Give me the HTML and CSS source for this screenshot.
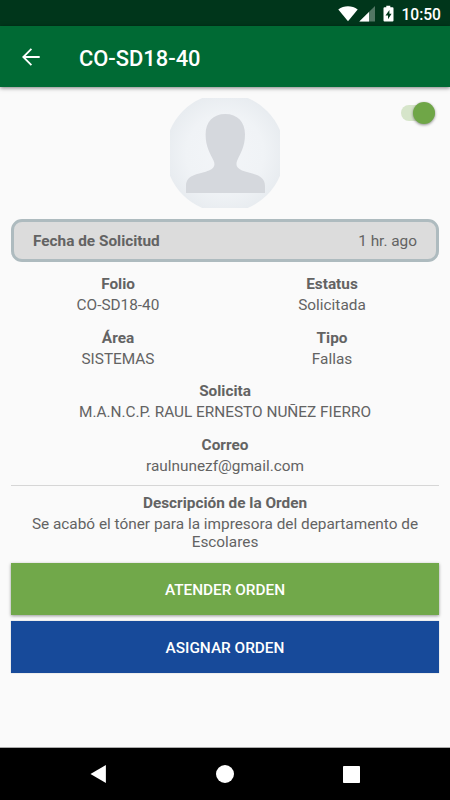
FILE: index.html
```html
<!DOCTYPE html>
<html lang="es">
<head>
<meta charset="utf-8">
<title>CO-SD18-40</title>
<link rel="stylesheet" href="styles.css">
</head>
<body>
<div class="screen">
  <div class="status">
    <svg class="status-icons" width="56" height="20" viewBox="0 0 56 20">
      <path fill="#fff" d="M0.3 4.4C5.8.1 14 .1 19.700 4.400L10 16.300Z"/>
      <path fill="#fff" fill-opacity=".32" d="M37 1V16.600H21.300Z"/>
      <path fill="#fff" d="M31 7V16.600H21.300Z"/>
      <path fill="#fff" fill-rule="evenodd" d="M48.300 0.800h4V2.300h2.200a1 1 0 0 1 1 1V15.600a1 1 0 0 1-1 1h-8a1 1 0 0 1-1-1V3.300a1 1 0 0 1 1-1h1.800ZM51.400 5L47.500 10.500H50V14.300L53.600 8.800H51.400Z"/>
    </svg>
    <span class="clock">10:50</span>
  </div>
  <header class="appbar">
    <svg class="back" width="18" height="18" viewBox="0 0 18 18" fill="none" stroke="#fff" stroke-width="1.800"><path d="M17.700 9H1.500M9.400 .9L1.300 9l8.100 8.100"/></svg>
    <h1 class="title">CO-SD18-40</h1>
  </header>
  <main class="content">
    <div class="profile">
      <svg class="avatar" width="110" height="110" viewBox="0 0 110 110">
        <defs>
          <radialGradient id="disc"><stop offset="0" stop-color="#f3f5f8"/><stop offset=".65" stop-color="#f0f3f6"/><stop offset="1" stop-color="#e8ecf0"/></radialGradient>
        </defs>
        <circle cx="55" cy="55" r="59.500" fill="url(#disc)"/>
        <path fill="#d5d8dd" d="M55.300 16C67.500 16 75 24 75 36.500C75 49 70 56 67.200 62.500C65.500 67 66.500 70 72 72.500C80 76 95 75.500 95 88V95H16V88C16 75.500 31 76 39 72.500C44.500 70 45.500 67 43.500 62.500C40.500 56 35.600 49 35.600 36.500C35.600 24 43 16 55.300 16Z"/>
      </svg>
      <div class="switch"><span class="thumb"></span></div>
    </div>
    <div class="date"><b>Fecha de Solicitud</b><span>1 hr. ago</span></div>
    <div class="fields">
      <div class="field"><b>Folio</b><span>CO-SD18-40</span></div>
      <div class="field"><b>Estatus</b><span>Solicitada</span></div>
      <div class="field"><b>Área</b><span>SISTEMAS</span></div>
      <div class="field"><b>Tipo</b><span>Fallas</span></div>
      <div class="field wide"><b>Solicita</b><span>M.A.N.C.P. RAUL ERNESTO NUÑEZ FIERRO</span></div>
      <div class="field wide"><b>Correo</b><span>raulnunezf@gmail.com</span></div>
    </div>
    <div class="field description"><b>Descripción de la Orden</b><span>Se acabó el tóner para la impresora del departamento de Escolares</span></div>
    <button class="btn attend">ATENDER ORDEN</button>
    <button class="btn assign">ASIGNAR ORDEN</button>
  </main>
  <nav class="nav">
    <svg width="18" height="20" viewBox="0 0 18 20"><path fill="#fff" d="M15.900 1V19L0.500 10Z"/></svg>
    <svg width="18" height="18" viewBox="0 0 18 18"><circle cx="9" cy="9" r="9" fill="#fff"/></svg>
    <svg width="18" height="17" viewBox="0 0 18 17"><rect x="1" width="17" height="17" rx=".8" fill="#fff"/></svg>
  </nav>
</div>
</body>
</html>
```

FILE: styles.css
```css
* { box-sizing: border-box; }
body { margin: 0; background: #fafafa; font-family: Roboto, sans-serif; font-size: 15.36px; line-height: 18px; color: #636363; }
.screen { width: 450px; height: 800px; display: flex; flex-direction: column; overflow: hidden; }
.status { height: 26px; flex: none; background: #00361b; display: flex; justify-content: flex-end; align-items: center; padding-right: 9px; color: #fff; }
.status-icons { margin: 4px 7px 0 0; }
.clock { font-size: 15.6px; font-weight: 500; padding-top: 3px; }
.appbar { height: 61px; flex: none; background: #006a34; display: flex; align-items: center; padding: 0 22px; box-shadow: 0 1px 4px rgba(0,0,0,.5); }
.back { flex: none; }
.title { margin: 4px 0 0 39px; font-size: 21.9px; line-height: 26px; font-weight: 500; color: #fff; }
.content { flex: 1; padding: 11px 11px 0; display: flex; flex-direction: column; }
.profile { height: 110px; display: grid; grid-template-columns: 1fr 110px 1fr; }
.avatar { grid-column: 2; }
.switch { width: 34px; height: 16px; margin: 7px 4px 0 0; justify-self: end; border-radius: 8px; background: #d6e5ca; display: flex; justify-content: flex-end; align-items: center; }
.thumb { width: 22px; height: 22px; flex: none; border-radius: 50%; background: #6fa647; box-shadow: 0 1px 3px rgba(0,0,0,.45); }
.date { height: 43px; margin-top: 11px; border: 3px solid #aebbbf; border-radius: 11px; background: #dcdcdc; padding: 1px 19px 0; display: flex; justify-content: space-between; align-items: center; }
.fields { display: grid; grid-template-columns: 1fr 1fr; row-gap: 14.4px; padding: 13.4px 0 10.4px; }
.field { display: flex; flex-direction: column; gap: 3px; text-align: center; }
.wide { grid-column: span 2; }
b { font-weight: 700; }
.description { border-top: 1px solid #d6d6d6; padding-top: 8px; }
.btn { height: 52px; flex: none; border: 0; border-radius: 0; padding: 2px 0 0; font: 500 15.36px/18px Roboto, sans-serif; color: #fff; box-shadow: 0 1px 3px rgba(0,0,0,.4); }
.attend { margin-top: 12px; background: #71a84a; }
.assign { margin-top: 6px; background: #174a9a; box-shadow: 0 0 1px rgba(0,0,0,.3); }
.nav { height: 53px; flex: none; background: #000; border-top: 1px solid #aaa; display: flex; align-items: center; justify-content: space-between; padding: 0 90px; }
```
